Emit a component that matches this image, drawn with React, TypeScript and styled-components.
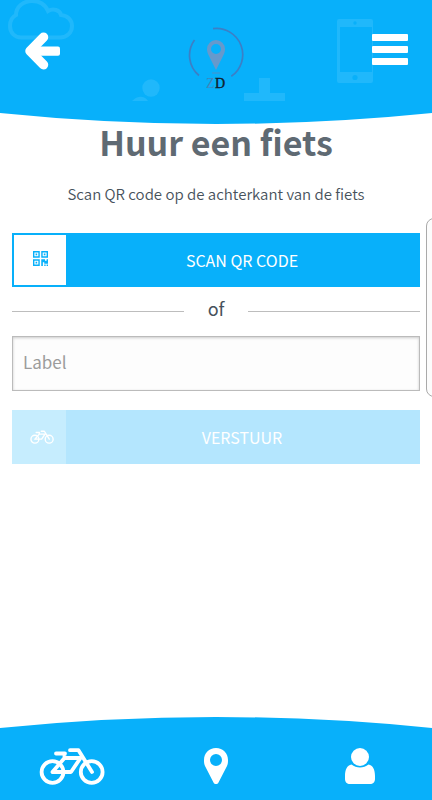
import React, { useState } from 'react';
import styled, { createGlobalStyle } from 'styled-components';

const blue = '#08b0fa';

const GlobalStyle = createGlobalStyle`
  *, *::before, *::after { box-sizing: border-box; }
  body {
    margin: 0;
    background: #fff;
    color: #47525c;
    font-family: "Noto Sans CJK SC", "Noto Sans", sans-serif;
  }
`;

const Screen = styled.div`
  position: relative;
  display: flex;
  flex-direction: column;
  min-height: 100vh;
  overflow: hidden;
`;

const Header = styled.header`
  position: relative;
  height: 113px;
  background: ${blue};
`;

const HeaderBar = styled.div`
  position: relative;
  display: grid;
  grid-template-columns: 1fr auto 1fr;
  align-items: start;
  padding: 26px 24px 0;
`;

const IconButton = styled.button<{ $end?: boolean }>`
  display: flex;
  justify-self: ${(p) => (p.$end ? 'end' : 'start')};
  padding: 6px 0;
  border: 0;
  background: none;
  color: #fff;
  cursor: pointer;
`;

const Decoration = styled.svg<{ $side: 'left' | 'right' }>`
  position: absolute;
  top: 0;
  ${(p) => p.$side}: 0;
`;

const Curve = styled.svg`
  display: block;
  flex: none;
  width: 100%;
  height: 11px;
  fill: ${blue};
`;

const Main = styled.main`
  flex: 1;
  padding: 0 12px;
`;

const Title = styled.h1`
  margin: 0;
  color: #5f6a73;
  font-size: 34px;
  line-height: 36px;
  font-weight: 700;
  text-align: center;
`;

const Intro = styled.p`
  margin: 22px 0 27px;
  font-size: 15px;
  line-height: 24px;
  font-weight: 350;
  text-align: center;
`;

const ActionButton = styled.button`
  display: flex;
  width: 100%;
  height: 54px;
  padding: 0;
  border: 2px solid ${blue};
  background: ${blue};
  color: #fff;
  font-family: inherit;
  font-size: 16px;
  line-height: 24px;
  text-transform: uppercase;
  cursor: pointer;

  &:disabled {
    border-color: #b4e6fe;
    background: #b4e6fe;
    cursor: default;
  }
`;

const ActionIcon = styled.span<{ $faded?: boolean }>`
  display: flex;
  align-items: center;
  justify-content: center;
  width: ${(p) => (p.$faded ? '54px' : '52px')};
  margin: ${(p) => (p.$faded ? '-2px 0 -2px -2px' : '0')};
  align-self: stretch;
  padding: ${(p) => (p.$faded ? '0 0 0 5px' : '0 0 4px')};
  background: ${(p) => (p.$faded ? '#c6edfe' : '#fff')};
  color: ${(p) => (p.$faded ? '#fff' : blue)};
`;

const ActionText = styled.span`
  flex: 1;
  align-self: center;
  text-align: center;
`;

const Divider = styled.div`
  display: flex;
  align-items: center;
  gap: 24px;
  margin: 7px 0 13px;
  font-size: 18px;
  line-height: 29px;

  &::before, &::after {
    content: "";
    flex: 1;
    height: 1px;
    margin-top: 5px;
    background: #bdbdbd;
  }
`;

const TextInput = styled.input`
  display: block;
  width: 100%;
  height: 55px;
  margin-bottom: 19px;
  padding: 0 10px 4px;
  border: 1px solid #bbb;
  border-radius: 0;
  background: #fdfdfd;
  box-shadow: inset 0 1px 3px rgba(0, 0, 0, 0.2);
  color: #47525c;
  font-family: inherit;
  font-size: 17px;

  &::placeholder { color: #9c9c9c; opacity: 1; }
`;

const SidePanel = styled.aside`
  position: absolute;
  top: 218px;
  right: -10px;
  width: 16px;
  height: 179px;
  border: 1px solid #aaa;
  border-radius: 8px;
  background: #fcfcfc;
`;

const Footer = styled.footer`
  display: flex;
  flex-direction: column;
`;

const Nav = styled.nav`
  display: grid;
  grid-template-columns: repeat(3, 1fr);
  height: 72px;
  background: ${blue};
`;

const NavLink = styled.a`
  display: flex;
  justify-content: center;
  align-items: center;
  padding-top: 4px;
  color: #fff;
`;

const Bicycle = ({ width, height }: { width: number; height: number }) => (
  <svg width={width} height={height} viewBox="0 0 66 38" fill="none" stroke="currentColor" strokeWidth="3.800" strokeLinecap="round" strokeLinejoin="round" aria-hidden="true">
    <circle cx="13.500" cy="25" r="10.900" />
    <circle cx="52.700" cy="25" r="10.900" />
    <path d="M13.500 25h18.500L41.500 11H25.500L13.500 25M25.500 11V6.500M17 6.500h9M31 3.200h8.500L53 25" />
  </svg>
);

const Arrow = () => (
  <svg width="36" height="38" viewBox="0 0 36 38" fill="none" stroke="currentColor" aria-hidden="true">
    <rect x="6" y="14.400" width="30" height="9.300" rx="2" fill="currentColor" stroke="none" />
    <path d="M19.500 5.200L6 19l13.500 13.800" strokeWidth="9.500" strokeLinecap="round" strokeLinejoin="round" />
  </svg>
);

const Bars = () => (
  <svg width="36" height="38" viewBox="0 0 36 38" fill="currentColor" aria-hidden="true">
    <rect y="2" width="36" height="7" rx="1" />
    <rect y="14" width="36" height="7" rx="1" />
    <rect y="26" width="36" height="7" rx="1" />
  </svg>
);

const LogoText = styled.text`
  font-family: "Liberation Serif", serif;
  font-size: 14px;
`;

const Logo = () => (
  <svg width="56" height="66" viewBox="0 0 56 66" role="img" aria-label="ZD">
    <g fill="none" stroke="#3c7fc6" strokeWidth="1.700">
      <path d="M25 2.700A26.200 26.200 0 0 1 43.300 50.300" />
      <path d="M6.500 14A26.200 26.200 0 0 0 11 49.500" />
    </g>
    <path fill="#6699cc" fillRule="evenodd" d="M28 14a9 9 0 0 0-9 9c0 3 1 5 2 7l7 14 7-14c1-2 2-4 2-7a9 9 0 0 0-9-9zm0 4a5 5 0 1 1 0 10 5 5 0 0 1 0-10z" />
    <path d="M24 47h8" stroke="#4b91c8" strokeWidth="1" />
    <LogoText x="18" y="62" fill="#3f86bd">Z</LogoText>
    <LogoText x="27" y="62" fill="#10202c" stroke="#10202c" strokeWidth=".4">D</LogoText>
  </svg>
);

const QrCode = () => (
  <svg width="15" height="15" viewBox="0 0 14 14" fill="currentColor" aria-hidden="true">
    <path fillRule="evenodd" d="M0 0h6.300v6.300H0zm1.300 1.300v3.700h3.700V1.300zM7.700 0H14v6.300H7.700zm1.300 1.300v3.700h3.700V1.300zM0 7.700h6.300V14H0zm1.300 1.300v3.700h3.700V9z" />
    <path d="M2.400 2.400h1.500v1.500H2.400zM10.100 2.400h1.500v1.500h-1.500zM2.400 10.100h1.500v1.500H2.400zM7.700 7.700h3.500V9h1.500V7.700H14v4.200h-3.500v-1.400H9.200V14H7.700zM10.500 12.700h1.300V14h-1.300zM12.700 12.700H14V14h-1.300z" />
  </svg>
);

export default function App() {
  const [label, setLabel] = useState('');
  return (
    <>
      <GlobalStyle />
      <Screen>
        <Header>
          <Decoration $side="left" width="170" height="102" viewBox="0 0 170 102" aria-hidden="true">
            <path d="M21 37.500h39c7 0 12-5 12-11.500S67 15.500 61 15c-1-5-8-7-13-4C45 4 39 1 32 1c-9 0-16 6-16 14-4 2-6 6-6 11 0 7 5 11.500 11 11.500z" fill="none" stroke="#20b8fb" strokeWidth="4" />
            <circle cx="151" cy="88" r="8.700" fill="#20b8fb" />
            <path d="M132 101c5-5 12-6 16 0z" fill="#20b8fb" />
          </Decoration>
          <Decoration $side="right" width="190" height="102" viewBox="0 0 190 102" aria-hidden="true">
            <path fill="#20b8fb" fillRule="evenodd" d="M97 19h32a2 2 0 0 1 2 2v60a2 2 0 0 1-2 2H97a2 2 0 0 1-2-2V21a2 2 0 0 1 2-2zm1 8v45h32V27z" />
            <g fill={blue}><circle cx="113" cy="23" r="1.700" /><circle cx="113" cy="77.500" r="2.600" /></g>
            <path d="M17 78h11v15h15v8H2v-8h15z" fill="#20b8fb" />
          </Decoration>
          <HeaderBar>
            <IconButton type="button" aria-label="Terug"><Arrow /></IconButton>
            <Logo />
            <IconButton type="button" aria-label="Menu" $end><Bars /></IconButton>
          </HeaderBar>
        </Header>
        <Curve viewBox="0 0 100 11" preserveAspectRatio="none" aria-hidden="true"><path d="M0 0Q50 22 100 0z" /></Curve>
        <Main>
          <Title>Huur een fiets</Title>
          <Intro>Scan QR code op de achterkant van de fiets</Intro>
          <ActionButton type="button">
            <ActionIcon><QrCode /></ActionIcon>
            <ActionText>Scan QR code</ActionText>
          </ActionButton>
          <Divider>of</Divider>
          <TextInput aria-label="Label" placeholder="Label" value={label} onChange={(e) => setLabel(e.target.value)} />
          <ActionButton type="button" disabled={label === ''}>
            <ActionIcon $faded><Bicycle width={24} height={14} /></ActionIcon>
            <ActionText>Verstuur</ActionText>
          </ActionButton>
        </Main>
        <Footer>
          <Curve viewBox="0 0 100 11" preserveAspectRatio="none" aria-hidden="true"><path d="M0 11Q50 -11 100 11z" /></Curve>
          <Nav>
            <NavLink href="#fietsen" aria-label="Fietsen"><Bicycle width={66} height={38} /></NavLink>
            <NavLink href="#kaart" aria-label="Kaart">
              <svg width="26" height="38" viewBox="0 0 26 38" fill="currentColor" aria-hidden="true">
                <path fillRule="evenodd" d="M13 1C6 1 1 6 1 13c0 2 0 4 1 6l8.500 16.500c1 2 4 2 5 0L24 19c1-2 1-4 1-6 0-7-5-12-12-12zm0 6a6 6 0 1 1 0 12 6 6 0 0 1 0-12z" />
              </svg>
            </NavLink>
            <NavLink href="#profiel" aria-label="Profiel">
              <svg width="30" height="38" viewBox="0 0 30 38" fill="currentColor" aria-hidden="true">
                <circle cx="15" cy="10" r="9" />
                <path d="M6.500 17.500C2 18 0 23 0 29v3c0 3 2 5 5 5h20c3 0 5-2 5-5v-3c0-6-2-11-6.500-11.500-5 4-12 4-17 0z" />
              </svg>
            </NavLink>
          </Nav>
        </Footer>
        <SidePanel aria-hidden="true" />
      </Screen>
    </>
  );
}
